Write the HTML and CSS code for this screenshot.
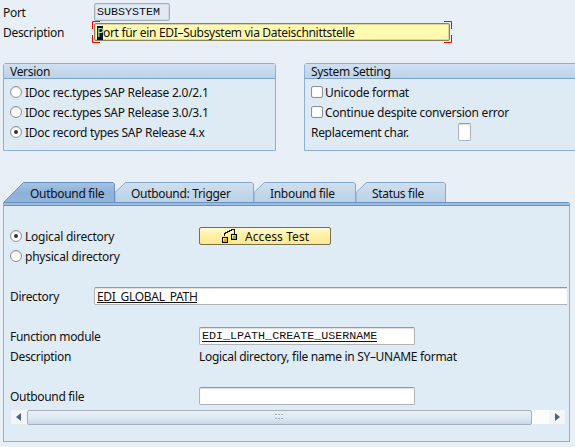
FILE: index.html
```html
<!DOCTYPE html>
<html lang="en">
<head>
<meta charset="utf-8">
<title>Port</title>
<link rel="stylesheet" href="styles.css">
</head>
<body>
<main class="screen">
  <section class="header">
    <div class="row"><span class="label wide">Port</span><div class="field readonly mono">SUBSYSTEM</div></div>
    <div class="row"><span class="label wide">Description</span>
      <div class="field focused"><span class="caret">P</span><span class="t-desc">ort für ein EDI–Subsystem via Dateischnittstelle</span>
        <svg class="bracket" width="360" height="22" viewBox="0 0 360 22"><path d="M8 .5H.5V8M.5 14v7.5H8M352 .5h7.500V8M359.500 14v7.500H352" fill="none" stroke="#f00"/></svg>
      </div>
    </div>
  </section>

  <section class="groups">
    <div class="group version">
      <h2>Version</h2>
      <div class="group-body">
        <div class="row"><i class="radio"></i><span class="t-rel">IDoc rec.types SAP Release 2.0/2.1</span></div>
        <div class="row"><i class="radio"></i><span class="t-rel">IDoc rec.types SAP Release 3.0/3.1</span></div>
        <div class="row"><i class="radio on"></i><span>IDoc record types SAP Release 4.x</span></div>
      </div>
    </div>
    <div class="group system">
      <h2>System Setting</h2>
      <div class="group-body">
        <div class="row"><i class="check"></i><span>Unicode format</span></div>
        <div class="row"><i class="check"></i><span class="t-cont">Continue despite conversion error</span></div>
        <div class="row"><span class="label repl">Replacement char.</span><div class="field char"></div></div>
      </div>
    </div>
  </section>

  <nav class="tabs">
    <div class="tab tab1"><svg width="112" height="21" viewBox="0 0 112 21"><defs><linearGradient id="ga" x2="0" y2="1"><stop stop-color="#a6c4e4"/><stop offset=".5" stop-color="#8db1da"/><stop offset="1" stop-color="#91b4dc"/></linearGradient><linearGradient id="gi" x2="0" y2="1"><stop stop-color="#cfdfee"/><stop offset="1" stop-color="#b9d0e6"/></linearGradient></defs><path d="M.5 21v-.5L20.500.5H110l1.500 1.500V21" fill="url(#ga)" stroke="#6993c3"/></svg><span>Outbound file</span></div>
    <div class="tab tab2"><svg width="139" height="21" viewBox="0 0 139 21"><path d="M0 21V10.500L10.500.5H137l1.500 1.500V21" fill="url(#gi)" stroke="#84a9cf"/></svg><span>Outbound: Trigger</span></div>
    <div class="tab tab3"><svg width="102" height="21" viewBox="0 0 102 21"><path d="M0 21V10.500L10.500.5H100l1.500 1.500V21" fill="url(#gi)" stroke="#84a9cf"/></svg><span>Inbound file</span></div>
    <div class="tab tab4"><svg width="90" height="21" viewBox="0 0 90 21"><path d="M0 21V10.500L10.500.5H88l1.500 1.500V21" fill="url(#gi)" stroke="#84a9cf"/></svg><span>Status file</span></div>
  </nav>

  <section class="panel">
    <div class="row"><div class="choice"><i class="radio on"></i><span>Logical directory</span></div>
      <button class="access" type="button"><svg width="16" height="14" viewBox="0 0 16 14" shape-rendering="crispEdges"><path d="M2.500 7V4.500h1V3.500h2V2.500h2V1.500h2V.5h3v4" fill="none" stroke="#111"/><path d="M.5 8.500h5v5h-5z" fill="#f7a21b" stroke="#000"/><path d="M9.500 5.500h5v5h-5z" fill="#8bb03e" stroke="#000"/><path d="M1 9h3v1H2v2H1zM10 6h3v1h-2v2h-1z" fill="#ffe993"/></svg><span>Access Test</span></button></div>
    <div class="row"><div class="choice"><i class="radio"></i><span>physical directory</span></div></div>
    <div class="row gap"><span class="label dir">Directory</span><div class="field clipped"><span class="value">EDI_GLOBAL_PATH</span></div></div>
    <div class="row gap"><span class="label fn">Function module</span><div class="field medium mono"><span class="value">EDI_LPATH_CREATE_USERNAME</span></div></div>
    <div class="row"><span class="label fn">Description</span><span class="t-long">Logical directory, file name in SY–UNAME format</span></div>
    <div class="row gap"><span class="label fn">Outbound file</span><div class="field medium"></div></div>
    <div class="scroll">
      <div class="arrow left"><svg width="5" height="8" viewBox="0 0 5 8"><path d="M5 0v8L0 4z" fill="#4c6478"/></svg></div>
      <div class="thumb"><svg width="9" height="6" viewBox="0 0 9 6"><g fill="#9eb0c1"><path d="M0 0h2v1H0zM3 0h2v1H3zM6 0h2v1H6zM0 4h2v1H0zM3 4h2v1H3zM6 4h2v1H6z"/></g><path d="M0 1h1v1H0zM3 1h1v1H3zM6 1h1v1H6zM0 5h1v1H0zM3 5h1v1H3zM6 5h1v1H6z" fill="#fff"/></svg></div>
      <div class="track"></div>
      <div class="arrow"><svg width="5" height="8" viewBox="0 0 5 8"><path d="M0 0v8l5-4z" fill="#4c6478"/></svg></div>
    </div>
  </section>
</main>
</body>
</html>
```
FILE: styles.css
```css
* { box-sizing: border-box; }
body {
  margin: 0;
  background: #e8eff6;
  color: #111;
  font: 12px/18px "Noto Sans", "Open Sans", sans-serif;
  letter-spacing: -0.31px;
  overflow: hidden;
}
.screen { width: 575px; height: 447px; padding: 2px 0 0 3px; overflow: hidden; }
.row { display: flex; align-items: center; height: 20px; white-space: nowrap; }
.row > span, .choice > span { padding-top: 2px; }
.label { flex: none; }
.wide { width: 91px; }

.field {
  position: relative;
  height: 18px;
  padding: 0 2px;
  line-height: 17px;
  background: #fff;
  border: 1px solid #b0b4b8;
  border-top-color: #94989b;
  border-radius: 2px;
  box-shadow: inset 0 1px 1px #ddd;
  white-space: nowrap;
}
.readonly { width: 76px; background: #dfeaf4; border-color: #a4adb6; box-shadow: inset 0 0 0 1px #d2dce6; }
.mono { font-family: "Liberation Mono", monospace; font-size: 11.700px; line-height: 17px; letter-spacing: 0; }
.focused { width: 356px; background: #fffab0; border-color: #87835c; box-shadow: inset 0 0 0 1px #d9d49a; }
.caret { display: inline-block; width: 6px; height: 14px; line-height: 14px; background: #06103a; color: #d7d98b; }
.bracket { position: absolute; left: -3px; top: -3px; }

.groups { display: flex; gap: 28px; margin-top: 21px; }
.group { height: 88px; border: 1px solid #8fb0d3; border-radius: 3px 3px 0 0; background: #deeaf4; }
.version { width: 273px; flex: none; }
.system { width: 275px; flex: none; }
.group h2 {
  margin: 0;
  height: 15px;
  padding-left: 6px;
  font: inherit;
  line-height: 16px;
  background: linear-gradient(#cfe0ef, #bdd3e9);
  border-bottom: 1px solid #7fa4cc;
}
.group-body { padding: 3px 0 0 6px; }
.repl { width: 147px; }
.char { width: 13px; }
.t-rel, .t-cont { letter-spacing: -0.26px; }

.radio, .check { flex: none; width: 12px; height: 12px; background: #fff; border: 1px solid #8d9298; margin-right: 3px; }
.radio { border-radius: 50%; display: grid; place-items: center; box-shadow: inset 0 1px 1px #ddd; }
.radio.on::after { content: ""; width: 4px; height: 4px; border-radius: 50%; background: #334; }
.check { border-radius: 2px; margin-right: 2px; box-shadow: inset 0 0 1px #bbb; }

.tabs { display: flex; height: 20px; margin-top: 31px; }
.tab { position: relative; flex: none; height: 21px; line-height: 23px; white-space: nowrap; }
.tab svg { position: absolute; left: 0; top: 0; }
.tab span { position: relative; }
.tab1 { width: 112px; padding-left: 27px; }
.tab2 { width: 139px; padding-left: 16px; }
.tab3 { width: 102px; padding-left: 16px; }
.tab4 { width: 90px; padding-left: 16px; }

.panel {
  position: relative;
  width: 567px;
  height: 240px;
  padding: 20px 2px 0 6px;
  border: 1px solid #8fb0d3;
  border-top: 0;
  border-radius: 0 2px 0 0;
  background: linear-gradient(#6892c2 0 1px, #9ebce0 1px 3px, #6892c2 3px 4px, #dfebf5 4px);
}
.panel .row:first-child { margin-top: 4px; }
.gap { margin-top: 20px; }
.choice { display: flex; align-items: center; width: 189px; flex: none; letter-spacing: -0.23px; }
.access {
  display: flex;
  align-items: center;
  width: 132px;
  height: 18px;
  padding: 0 0 0 22px;
  border: 1px solid #77704e;
  border-radius: 2px;
  background: linear-gradient(#fffad4, #fff0a2 50%, #fbe792);
  font: inherit;
  letter-spacing: 0.08px;
  color: inherit;
}
.access span { margin-left: 7px; padding-top: 2px; }
.dir { width: 84px; }
.fn { width: 189px; }
.clipped { width: 473px; border-right: 0; border-radius: 2px 0 0 2px; }
.medium { width: 216px; }
.value { display: inline-block; height: 12px; line-height: 12px; border-bottom: 1px solid #111; }

.scroll { display: flex; align-items: center; height: 16px; margin: 3px 1px 0 0; background: #fbfcfd; border: 1px solid #e5ebf2; }
.arrow { width: 16px; flex: none; display: grid; place-items: center; height: 14px; background: #f2f6fb; }
.arrow.left { padding-right: 2px; }
.thumb { flex: none; width: 505px; height: 15px; display: grid; place-items: center; border: 1px solid #a4b0bb; border-radius: 2px; background: linear-gradient(#e8eff6, #dfe9f2 50%, #cbd8e5); }
.track { flex: 1; }
```
